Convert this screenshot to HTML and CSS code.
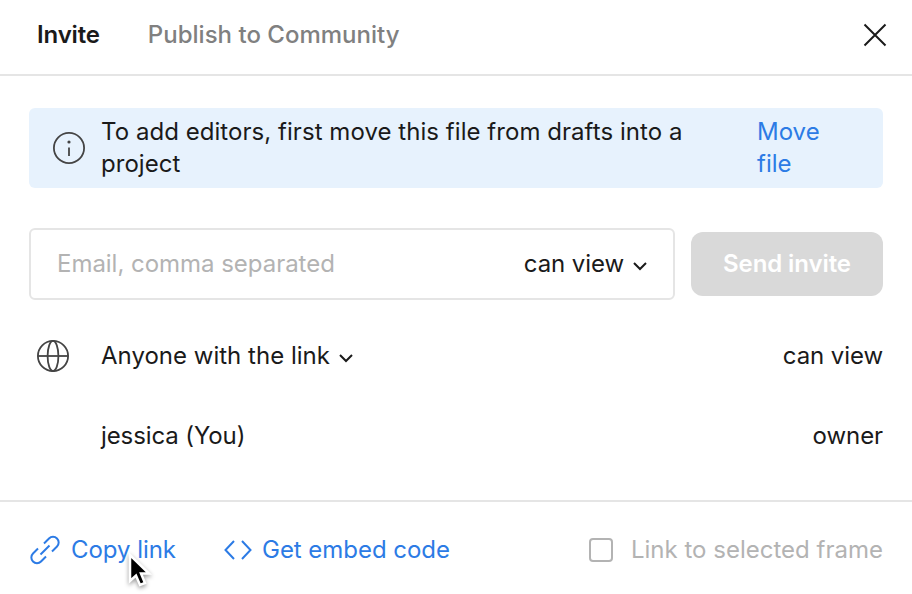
FILE: index.html
```html
<!DOCTYPE html>
<html lang="en">
<head>
  <meta charset="UTF-8" />
  <meta name="viewport" content="width=device-width, initial-scale=1" />
  <title>Invite</title>
  <link rel="stylesheet" href="styles.css">
</head>
<body>

  <div class="modal">
    <div class="modal-header">
      <div class="tab active">Invite</div>
      <div class="tab">Publish to Community</div>
      <svg class="close" width="24" height="24" viewBox="0 0 24 24"><path d="M1.5 1.5l21 21M22.5 1.5l-21 21" /></svg>
    </div>

    <div class="modal-body">
      <div class="banner">
        <svg class="icon-dark" width="32" height="32" viewBox="0 0 32 32">
          <circle cx="16" cy="16" r="15.1" />
          <path d="M16 15.5v8.500" />
          <circle class="dot" cx="16" cy="10" r="1.6" />
        </svg>
        <div class="banner-text">To add editors, first move this file from drafts into a project</div>
        <a class="banner-link">Move file</a>
      </div>

      <div class="invite-form">
        <div class="email-field">
          <span class="placeholder">Email, comma separated</span>
          <span class="permission">can view</span>
          <svg class="chevron" width="16" height="10" viewBox="0 0 16 10"><path d="M2 2l6 6 6-6" /></svg>
        </div>
        <div class="send-button">Send invite</div>
      </div>

      <div class="member">
        <svg class="icon-dark globe" width="32" height="32" viewBox="0 0 32 32">
          <circle cx="16" cy="16" r="15.1" />
          <ellipse cx="16" cy="16" rx="5.4" ry="15.1" />
          <path d="M1 16h30" />
        </svg>
        <span class="member-name">Anyone with the link</span>
        <svg class="chevron" width="16" height="10" viewBox="0 0 16 10"><path d="M2 2l6 6 6-6" /></svg>
        <span class="role">can view</span>
      </div>
      <div class="member no-icon">
        <span class="member-name">jessica (You)</span>
        <span class="role">owner</span>
      </div>
    </div>

    <div class="modal-footer">
      <a class="footer-link copy-link">
        <svg class="icon-blue" width="32" height="32" viewBox="0 0 32 32">
          <path d="M11.500 20.500l9-9" />
          <path d="M15 9.500l5-5a5.600 5.600 0 0 1 8 8l-5 5" />
          <path d="M17 22.500l-5 5a5.600 5.600 0 0 1-8-8l5-5" />
        </svg>
        Copy link
        <!-- mouse pointer -->
        <svg class="cursor" width="26" height="36" viewBox="0 0 26 36">
          <path d="M4 3v26l6-5.500 4 9.500 5-2-4-9.500h8z" />
        </svg>
      </a>
      <a class="footer-link embed-link">
        <svg class="icon-blue" width="28" height="20" viewBox="0 0 28 20"><path d="M10 1L1.500 10l8.500 9M18 1l8.500 9L18 19" /></svg>
        Get embed code
      </a>
      <div class="frame-option">
        <span class="checkbox"></span>
        Link to selected frame
      </div>
    </div>
  </div>

</body>
</html>
```

FILE: styles.css
```css
body {
  margin: 0;
  background: #fff;
  color: #1a1a1a;
  font-family: Inter, sans-serif;
  font-size: 24px;
  line-height: 32px;
  letter-spacing: 0.01px;
  overflow: hidden;
}

svg {
  display: block;
  flex-shrink: 0;
  fill: none;
}

.modal {
  width: 912px;
  height: 594px;
}

.modal-header {
  display: flex;
  align-items: center;
  height: 70px;
  padding: 0 25px 4px 37px;
  border-bottom: 2px solid #e5e5e5;
}

.tab {
  margin-right: 48px;
  color: #808080;
  font-weight: 500;
}

.tab.active {
  color: #1a1a1a;
  font-weight: 600;
  letter-spacing: -0.15px;
}

.close {
  margin-left: auto;
  stroke: #1a1a1a;
  stroke-width: 2;
}

.modal-body {
  height: 392px;
  padding: 32px 29px 0;
  box-sizing: content-box;
}

.banner {
  display: flex;
  align-items: center;
  height: 80px;
  padding: 0 24px;
  border-radius: 6px;
  background: #e7f2fd;
}

.banner-text {
  width: 600px;
  margin-left: 16px;
  letter-spacing: 0.05px;
}

.banner-link {
  width: 80px;
  margin-left: 56px;
  color: #2c7be5;
}

.icon-dark {
  stroke: #444;
  stroke-width: 1.8;
}

.icon-dark .dot {
  fill: #444;
  stroke: none;
}

.invite-form {
  display: flex;
  align-items: center;
  gap: 16px;
  margin-top: 40px;
}

.email-field {
  display: flex;
  align-items: center;
  width: 646px;
  height: 72px;
  padding: 0 25px 0 26px;
  border: 2px solid #e5e5e5;
  border-radius: 6px;
  box-sizing: border-box;
}

.placeholder {
  flex: 1;
  color: #b3b3b3;
  letter-spacing: -0.03px;
}

.permission,
.role {
  letter-spacing: -0.08px;
}

.chevron {
  margin: 4px 0 0 8px;
  stroke: #1a1a1a;
  stroke-width: 2;
}

.send-button {
  width: 192px;
  height: 64px;
  border-radius: 12px;
  background: #d9d9d9;
  color: #fff;
  font-weight: 600;
  line-height: 64px;
  letter-spacing: -0.1px;
  text-align: center;
}

.member {
  display: flex;
  align-items: center;
  height: 80px;
}

.invite-form + .member {
  margin-top: 16px;
}

.globe {
  margin: 0 32px 0 8px;
}

.no-icon {
  padding-left: 72px;
  letter-spacing: -0.1px;
}

.role {
  margin-left: auto;
}

.modal-footer {
  display: flex;
  align-items: center;
  height: 96px;
  padding: 0 29px;
  border-top: 2px solid #e5e5e5;
}

.footer-link {
  display: flex;
  align-items: center;
  gap: 10px;
  position: relative;
  color: #2c7be5;
  letter-spacing: -0.04px;
}

.embed-link {
  margin-left: 48px;
}

.icon-blue {
  stroke: #2c7be5;
  stroke-width: 2;
}

.cursor {
  position: absolute;
  left: 97px;
  top: 18px;
  overflow: visible;
  fill: #000;
  stroke: #fff;
  stroke-width: 2.5;
  filter: drop-shadow(0 2px 2px rgba(0, 0, 0, 0.4));
}

.frame-option {
  display: flex;
  align-items: center;
  gap: 18px;
  margin-left: auto;
  color: #b3b3b3;
}

.checkbox {
  width: 20px;
  height: 20px;
  border: 2px solid #b3b3b3;
  border-radius: 4px;
}
```
